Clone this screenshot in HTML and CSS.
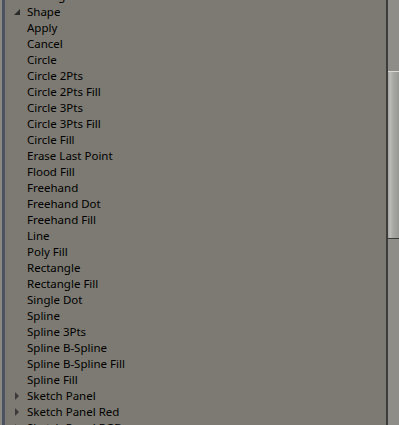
FILE: index.html
```html
<!DOCTYPE html>
<html lang="en">
<head>
    <meta charset="UTF-8">
    <title>Shapes</title>
    <link rel="stylesheet" href="styles.css">
</head>
<body>
    <div class="panel">
        <div class="edge"></div>
        <div class="tree">
            <div class="row group"><span class="arrow right"></span>Settings</div>
            <div class="row group"><span class="arrow down"></span>Shape</div>
            <div class="row">Apply</div>
            <div class="row">Cancel</div>
            <div class="row">Circle</div>
            <div class="row">Circle 2Pts</div>
            <div class="row">Circle 2Pts Fill</div>
            <div class="row">Circle 3Pts</div>
            <div class="row">Circle 3Pts Fill</div>
            <div class="row">Circle Fill</div>
            <div class="row">Erase Last Point</div>
            <div class="row">Flood Fill</div>
            <div class="row">Freehand</div>
            <div class="row">Freehand Dot</div>
            <div class="row">Freehand Fill</div>
            <div class="row">Line</div>
            <div class="row">Poly Fill</div>
            <div class="row">Rectangle</div>
            <div class="row">Rectangle Fill</div>
            <div class="row">Single Dot</div>
            <div class="row">Spline</div>
            <div class="row">Spline 3Pts</div>
            <div class="row">Spline B-Spline</div>
            <div class="row">Spline B-Spline Fill</div>
            <div class="row">Spline Fill</div>
            <div class="row group"><span class="arrow right"></span>Sketch Panel</div>
            <div class="row group"><span class="arrow right"></span>Sketch Panel Red</div>
            <div class="row group"><span class="arrow right"></span>Sketch Panel RGB</div>
        </div>
        <div class="scrollbar">
            <div class="thumb"></div>
        </div>
    </div>
</body>
</html>
```

FILE: styles.css
```css
body {
    margin: 0;
    background-color: #7c7a72;
    overflow: hidden;
}

.panel {
    display: flex;
    height: 425px;
    overflow: hidden;
}

.edge {
    width: 2px;
    border-right: 3px solid #4c5260;
    background-color: #8a8984;
    flex: none;
}

.tree {
    flex: 1;
    margin-top: -12px;
    font-family: "Noto Sans", sans-serif;
    font-size: 11.5px;
    color: #000;
}

.row {
    height: 16px;
    line-height: 16px;
    padding-left: 22px;
    white-space: nowrap;
    position: relative;
}

.arrow {
    position: absolute;
    width: 0;
    height: 0;
}

.arrow.down {
    left: 9px;
    top: 5px;
    border-left: 6px solid transparent;
    border-bottom: 6px solid #2c2c2c;
}

.arrow.right {
    left: 10px;
    top: 4px;
    border-top: 4px solid transparent;
    border-bottom: 4px solid transparent;
    border-left: 4px solid #3a3a3a;
}

.scrollbar {
    width: 11px;
    flex: none;
    border-left: 2px solid #3c3c3a;
    background-color: #8e8d88;
    position: relative;
}

.thumb {
    position: absolute;
    left: 0;
    right: 0;
    top: 71px;
    height: 166px;
    border-top: 1px solid #d8d8d4;
    border-bottom: 1px solid #3a3a38;
    background: linear-gradient(to right, #a4a4a0 0, #bcbcb8 2px, #a8a8a4 5px, #969692 100%);
}
```
